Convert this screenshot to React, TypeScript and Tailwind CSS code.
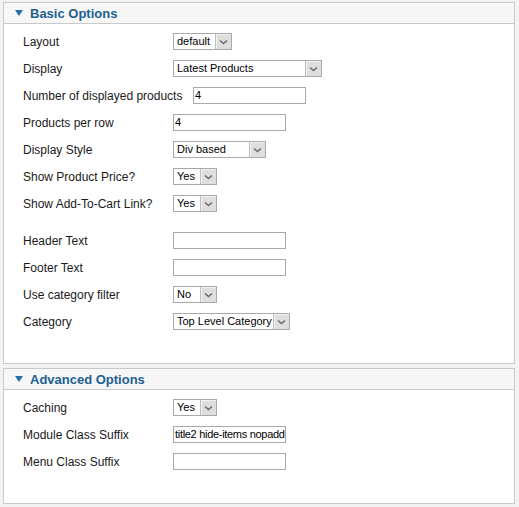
import React from 'react'

type Field =
  | { label: string; kind: 'select'; value: string; width: string }
  | { label: string; kind: 'input'; value?: string; width: string; offset?: boolean }
  | { kind: 'spacer' }

const basicFields: Field[] = [
  { label: 'Layout', kind: 'select', value: 'default', width: 'w-[59px]' },
  { label: 'Display', kind: 'select', value: 'Latest Products', width: 'w-[149px]' },
  { label: 'Number of displayed products', kind: 'input', value: '4', width: 'w-[113px]', offset: true },
  { label: 'Products per row', kind: 'input', value: '4', width: 'w-[113px]' },
  { label: 'Display Style', kind: 'select', value: 'Div based', width: 'w-[93px]' },
  { label: 'Show Product Price?', kind: 'select', value: 'Yes', width: 'w-[44px]' },
  { label: 'Show Add-To-Cart Link?', kind: 'select', value: 'Yes', width: 'w-[44px]' },
  { kind: 'spacer' },
  { label: 'Header Text', kind: 'input', width: 'w-[113px]' },
  { label: 'Footer Text', kind: 'input', width: 'w-[113px]' },
  { label: 'Use category filter', kind: 'select', value: 'No', width: 'w-[44px]' },
  { label: 'Category', kind: 'select', value: 'Top Level Category', width: 'w-[117px]' },
]

const advancedFields: Field[] = [
  { label: 'Caching', kind: 'select', value: 'Yes', width: 'w-[44px]' },
  { label: 'Module Class Suffix', kind: 'input', value: 'title2 hide-items nopadd', width: 'w-[113px]' },
  { label: 'Menu Class Suffix', kind: 'input', width: 'w-[113px]' },
]

function Chevron() {
  return (
    <svg width="9" height="6" viewBox="0 0 9 6" className="mt-[1px]">
      <path d="M1 1.5 L4.5 4.5 L8 1.5" fill="none" stroke="#6b6b6b" strokeWidth="1.6" />
    </svg>
  )
}

function Select({ value, width }: { value: string; width: string }) {
  return (
    <div className={`${width} h-[17px] flex border border-[#a9a9a9] bg-white`}>
      <div className="flex-1 pl-[3px] text-[11px] leading-[15px] text-black whitespace-nowrap overflow-hidden">
        {value}
      </div>
      <div className="w-[16px] h-full flex items-center justify-center bg-[#dedede] border-l border-[#bdbdbd] shadow-[inset_1px_1px_0_#f2f2f2]">
        <Chevron />
      </div>
    </div>
  )
}

function TextInput({ value, width }: { value?: string; width: string }) {
  return (
    <div
      className={`${width} h-[17px] border border-[#a9a9a9] bg-white pl-[1px] text-[11px] leading-[15px] tracking-[-0.3px] text-black whitespace-nowrap overflow-hidden`}
    >
      {value}
    </div>
  )
}

function Panel({ title, fields, bodyClass }: { title: string; fields: Field[]; bodyClass: string }) {
  return (
    <div className="w-[512px] border border-[#c9c9c9] bg-white">
      <div className="h-[21px] flex items-center gap-[7px] pl-[11px] bg-[#f7f7f7] border-b border-[#c9c9c9]">
        <svg width="8" height="6" viewBox="0 0 8 6">
          <path d="M0 0 H8 L4 6 Z" fill="#2273ad" />
        </svg>
        <span className="text-[13px] font-bold text-[#1c5f91] leading-none">{title}</span>
      </div>
      <div className={bodyClass}>
        {fields.map((f, i) =>
          f.kind === 'spacer' ? (
            <div key={i} className="h-[10px]" />
          ) : (
            <div key={i} className="h-[27px] flex items-center pl-[19px]">
              <div className={`${f.kind === 'input' && f.offset ? 'w-[170px]' : 'w-[150px]'} text-[12px] text-[#1a1a1a] whitespace-nowrap`}>
                {f.label}
              </div>
              {f.kind === 'select' ? (
                <Select value={f.value} width={f.width} />
              ) : (
                <TextInput value={f.value} width={f.width} />
              )}
            </div>
          )
        )}
      </div>
    </div>
  )
}

export default function App() {
  return (
    <div className="w-[519px] h-[507px] bg-[#f3f3f3] pl-[3px] pt-[2px] flex flex-col gap-[4px] font-['Liberation_Sans',Arial,sans-serif]">
      <Panel title="Basic Options" fields={basicFields} bodyClass="pt-[4px] pb-[28px]" />
      <Panel title="Advanced Options" fields={advancedFields} bodyClass="pt-[4px] pb-[28px]" />
    </div>
  )
}
